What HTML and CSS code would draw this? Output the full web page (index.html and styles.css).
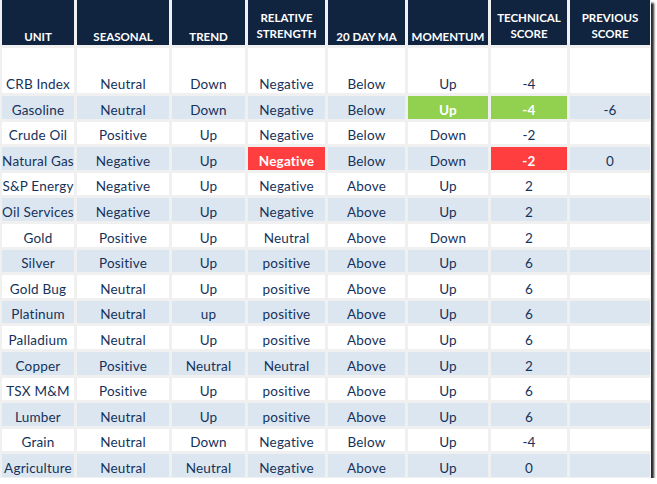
FILE: index.html
```html
<!DOCTYPE html>
<html>
<head>
<meta charset="utf-8">
<link rel="stylesheet" href="styles.css">
</head>
<body>
<div class="sheet">
  <div class="h">UNIT</div>
  <div class="h">SEASONAL</div>
  <div class="h">TREND</div>
  <div class="h two">RELATIVE<br>STRENGTH</div>
  <div class="h">20 DAY MA</div>
  <div class="h">MOMENTUM</div>
  <div class="h two">TECHNICAL<br>SCORE</div>
  <div class="h two">PREVIOUS<br>SCORE</div>

  <div class="c">CRB Index</div><div class="c">Neutral</div><div class="c">Down</div><div class="c">Negative</div><div class="c">Below</div><div class="c">Up</div><div class="c">-4</div><div class="c"></div>

  <div class="c b">Gasoline</div><div class="c b">Neutral</div><div class="c b">Down</div><div class="c b">Negative</div><div class="c b">Below</div><div class="c g">Up</div><div class="c g">-4</div><div class="c b">-6</div>

  <div class="c">Crude Oil</div><div class="c">Positive</div><div class="c">Up</div><div class="c">Negative</div><div class="c">Below</div><div class="c">Down</div><div class="c">-2</div><div class="c"></div>

  <div class="c b">Natural Gas</div><div class="c b">Negative</div><div class="c b">Up</div><div class="c r">Negative</div><div class="c b">Below</div><div class="c b">Down</div><div class="c r">-2</div><div class="c b">0</div>

  <div class="c">S&amp;P Energy</div><div class="c">Negative</div><div class="c">Up</div><div class="c">Negative</div><div class="c">Above</div><div class="c">Up</div><div class="c">2</div><div class="c"></div>

  <div class="c b">Oil Services</div><div class="c b">Negative</div><div class="c b">Up</div><div class="c b">Negative</div><div class="c b">Above</div><div class="c b">Up</div><div class="c b">2</div><div class="c b"></div>

  <div class="c">Gold</div><div class="c">Positive</div><div class="c">Up</div><div class="c">Neutral</div><div class="c">Above</div><div class="c">Down</div><div class="c">2</div><div class="c"></div>

  <div class="c b">Silver</div><div class="c b">Positive</div><div class="c b">Up</div><div class="c b">positive</div><div class="c b">Above</div><div class="c b">Up</div><div class="c b">6</div><div class="c b"></div>

  <div class="c">Gold Bug</div><div class="c">Neutral</div><div class="c">Up</div><div class="c">positive</div><div class="c">Above</div><div class="c">Up</div><div class="c">6</div><div class="c"></div>

  <div class="c b">Platinum</div><div class="c b">Neutral</div><div class="c b">up</div><div class="c b">positive</div><div class="c b">Above</div><div class="c b">Up</div><div class="c b">6</div><div class="c b"></div>

  <div class="c">Palladium</div><div class="c">Neutral</div><div class="c">Up</div><div class="c">positive</div><div class="c">Above</div><div class="c">Up</div><div class="c">6</div><div class="c"></div>

  <div class="c b">Copper</div><div class="c b">Positive</div><div class="c b">Neutral</div><div class="c b">Neutral</div><div class="c b">Above</div><div class="c b">Up</div><div class="c b">2</div><div class="c b"></div>

  <div class="c">TSX M&amp;M</div><div class="c">Positive</div><div class="c">Up</div><div class="c">positive</div><div class="c">Above</div><div class="c">Up</div><div class="c">6</div><div class="c"></div>

  <div class="c b">Lumber</div><div class="c b">Neutral</div><div class="c b">Up</div><div class="c b">positive</div><div class="c b">Above</div><div class="c b">Up</div><div class="c b">6</div><div class="c b"></div>

  <div class="c">Grain</div><div class="c">Neutral</div><div class="c">Down</div><div class="c">Negative</div><div class="c">Below</div><div class="c">Up</div><div class="c">-4</div><div class="c"></div>

  <div class="c b">Agriculture</div><div class="c b">Neutral</div><div class="c b">Neutral</div><div class="c b">Negative</div><div class="c b">Above</div><div class="c b">Up</div><div class="c b">0</div><div class="c b"></div>
</div>
</body>
</html>
```
FILE: styles.css
```css
html, body {
  margin: 0;
  padding: 0;
  background: #ffffff;
}

.sheet {
  box-sizing: border-box;
  width: 651px;
  height: 478px;
  padding: 0 1px 1px 2px;
  background: #f0f0f0;
  display: grid;
  grid-template-columns: 72px 92px 73px 77px 77px 80px 76px 80px;
  grid-template-rows: 45px 45px repeat(15, 22.6px);
  column-gap: 3px;
  row-gap: 3px;
  box-shadow: 3px 3px 2px rgba(20, 20, 20, 0.9);
  font-family: Lato, "Liberation Sans", sans-serif;
}

.h {
  background: #10243f;
  color: #ffffff;
  font-weight: 700;
  font-size: 11.5px;
  line-height: 16px;
  text-align: center;
  display: flex;
  align-items: flex-end;
  justify-content: center;
  padding-bottom: 0;
  white-space: nowrap;
}

.h.two {
  padding-bottom: 3px;
}

.c {
  background: #ffffff;
  color: #15325a;
  font-size: 13.5px;
  line-height: 16px;
  display: flex;
  align-items: flex-end;
  justify-content: center;
  padding-bottom: 1px;
  white-space: nowrap;
  letter-spacing: 0.2px;
}

.c.b {
  background: #dce6f1;
}

.c.g {
  background: #92d050;
  color: #ffffff;
  font-weight: 700;
}

.c.r {
  background: #ff3f3f;
  color: #ffffff;
  font-weight: 700;
}
```
